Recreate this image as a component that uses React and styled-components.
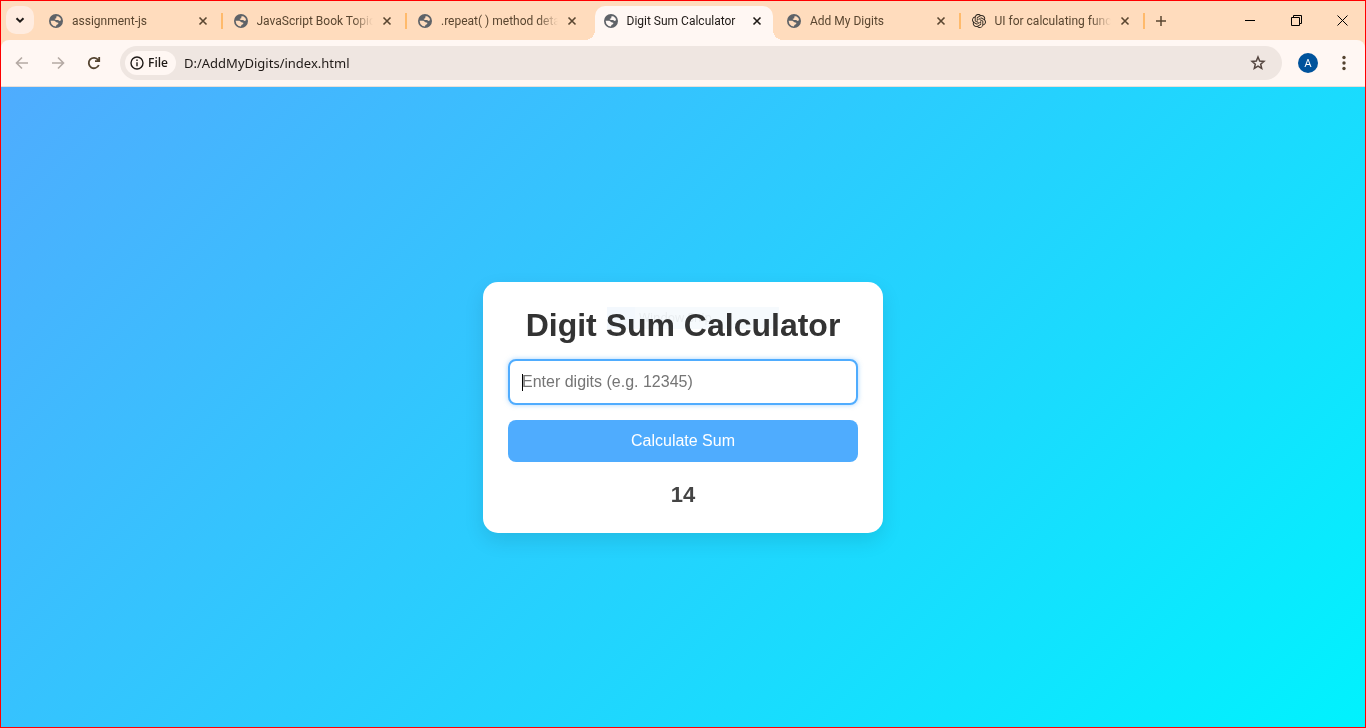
import React, { useState } from "react";
import styled, { createGlobalStyle, css } from "styled-components";
import { SiOpenai } from "react-icons/si";

const GlobalStyle = createGlobalStyle`
  *, *::before, *::after { box-sizing: border-box; }
  body { margin: 0; }
  button, input { font: inherit; color: inherit; margin: 0; }
  button { border: 0; background: none; padding: 0; cursor: pointer; }
`;

const chromeFont = `"Segoe UI", "Open Sans", "Noto Sans", sans-serif`;
const tabFont = `"Segoe UI", Roboto, "Open Sans", sans-serif`;
const strip = "#ffdcbd";
const bar = "#fff7f3";

const Window = styled.div`
  min-height: 100vh;
  display: flex;
  flex-direction: column;
  border: 1px solid #f00;
`;

const TabStrip = styled.header`
  display: flex;
  align-items: stretch;
  height: 39px;
  background: ${strip};
  font: 12px/16px ${tabFont};
  color: #5a4630;
`;

const TabSearch = styled.button`
  display: grid;
  place-items: center;
  flex: none;
  width: 28px;
  height: 28px;
  margin: 5px 4px 0 5px;
  border-radius: 10px;
  background: #ffece0;
  color: #1f1a17;
`;

const TabList = styled.div`
  display: grid;
  grid-template-columns: repeat(6, minmax(0, 1fr));
  flex: 0 1 1107px;
  min-width: 0;
`;

const Tab = styled.div`
  position: relative;
  display: flex;
  align-items: center;
  min-width: 0;
  padding-left: 11px;
  ${(p) =>
    p.$active &&
    css`
      color: #1f1a17;
      margin: 5px 3px 0;
      padding: 0 0 5px 9px;
      border-radius: 10px 10px 0 0;
      background: ${bar};
      &::before,
      &::after {
        content: "";
        position: absolute;
        bottom: 0;
        width: 10px;
        height: 10px;
      }
      &::before {
        right: 100%;
        background: radial-gradient(circle at 0 0, transparent 10px, ${bar} 10px);
      }
      &::after {
        left: 100%;
        background: radial-gradient(circle at 100% 0, transparent 10px, ${bar} 10px);
      }
    `}
`;

const TabLabel = styled.button`
  display: flex;
  align-items: center;
  gap: 9px;
  flex: 1;
  min-width: 0;
  text-align: left;
  svg { flex: none; }
`;

const TabTitle = styled.span`
  flex: 1;
  overflow: hidden;
  white-space: nowrap;
  ${(p) =>
    p.$fade &&
    css`
      mask-image: linear-gradient(to left, transparent, #000 20px);
    `}
`;

const TabClose = styled.button`
  display: grid;
  place-items: center;
  flex: none;
  width: 16px;
  height: 16px;
  margin: 0 ${(p) => (p.$active ? 8 : 10)}px 0 6px;
`;

const Divider = styled.span`
  flex: none;
  width: 2px;
  height: 16px;
  background: ${(p) => (p.$hidden ? "transparent" : "#ffba6b")};
`;

const NewTab = styled.button`
  display: grid;
  place-items: center;
  flex: none;
  width: 32px;
`;

const WindowControls = styled.div`
  display: flex;
  margin-left: auto;
  color: #000;
`;

const WindowButton = styled.button`
  display: grid;
  place-items: center;
  width: 46px;
  padding-left: 1px;
`;

const ToolbarBack = styled.div`
  background: ${strip};
`;

const Toolbar = styled.nav`
  display: flex;
  align-items: center;
  height: 47px;
  padding: 0 3px;
  border-bottom: 1px solid #e8dfd9;
  border-radius: 8px 8px 0 0;
  background: ${bar};
  font: 13px/18px ${chromeFont};
  color: #54432f;
`;

const ToolButton = styled.button`
  display: grid;
  place-items: center;
  flex: none;
  width: 36px;
  height: 34px;
  &:disabled { color: #b5aaa4; }
`;

const AddressBar = styled.div`
  display: flex;
  align-items: center;
  flex: 1;
  min-width: 0;
  height: 34px;
  margin: 0 8px;
  padding: 0 14px 0 5px;
  border-radius: 17px;
  background: #efe6e1;
  color: #1f1a17;
`;

const FileChip = styled.button`
  display: flex;
  align-items: center;
  gap: 3px;
  height: 24px;
  padding: 0 8px 0 4px;
  border-radius: 12px;
  background: ${bar};
  font-size: 12px;
  font-weight: 600;
`;

const Address = styled.input`
  flex: 1;
  min-width: 0;
  border: 0;
  padding: 0 8px;
  outline: 0;
  background: none;
  font-family: "Segoe UI", "Noto Sans", sans-serif;
`;

const BookmarkButton = styled.button`
  display: grid;
  place-items: center;
  width: 20px;
  height: 20px;
  color: #54453f;
`;

const Avatar = styled.span`
  display: grid;
  place-items: center;
  width: 20px;
  height: 20px;
  border-radius: 50%;
  background: #00539c;
  color: #fff;
  font-size: 11px;
`;

const Page = styled.main`
  flex: 1;
  display: flex;
  align-items: center;
  justify-content: center;
  background: linear-gradient(135deg, #4facfe, #00f2fe);
  font-family: Arial, "Liberation Sans", sans-serif;
`;

const Card = styled.form`
  position: relative;
  width: 400px;
  max-width: 100%;
  padding: 25px;
  border-radius: 15px;
  background: #fff;
  box-shadow: 0 8px 20px rgba(0, 0, 0, 0.1);
  text-align: center;
`;

const Heading = styled.h1`
  margin: 0 0 15px;
  font-size: 32px;
  line-height: 37px;
  color: #333;
`;

const DigitsInput = styled.input`
  display: block;
  width: 100%;
  height: 46px;
  margin-bottom: 15px;
  padding: 12px;
  border: 2px solid #4facfe;
  border-radius: 8px;
  outline: 0;
  font-size: 16px;
  line-height: 18px;
  color: #000;
  caret-color: transparent;
  background: linear-gradient(#000, #000) 12px 13px / 1px 17px no-repeat #fff;
  box-shadow: 0 0 5px rgba(79, 172, 254, 0.5);
  &::placeholder { color: #757575; }
`;

const SubmitButton = styled.button`
  display: block;
  width: 100%;
  height: 42px;
  border-radius: 8px;
  background: #4facfe;
  color: #fff;
  font-size: 16px;
`;

const Result = styled.output`
  display: block;
  margin-top: 20px;
  font-size: 22px;
  font-weight: bold;
  line-height: 26px;
  color: #444;
`;

const SnipHint = styled.div`
  position: absolute;
  top: 25px;
  left: 124px;
  width: 172px;
  height: 22px;
  padding-left: 32px;
  background: linear-gradient(to right, #f3f8fd 28px, #f6fafd 28px);
  color: #e9edf0;
  font: 12px/22px ${chromeFont};
  text-align: left;
  mix-blend-mode: multiply;
  pointer-events: none;
`;

const Stroke = ({ size, d, width = 2 }) => (
  <svg width={size} height={size} viewBox={`0 0 ${size} ${size}`} fill="none" stroke="currentColor" strokeWidth={width} aria-hidden="true">
    <path d={d} />
  </svg>
);

const Globe = () => (
  <svg width="14" height="14" viewBox="0 0 14 14" fill="#5f6368" fillRule="evenodd" aria-hidden="true">
    <path d="M7 0A7 7 0 1 1 7 14A7 7 0 1 1 7 0ZM7.500 2.200L9.200 2.200 11.400 4 12.100 6.300 10.200 6.900 9.300 6 6.800 6 5.500 4.900 7.200 4.200ZM1.600 6.800L5.400 6.800 7.400 8.200 9.300 8.700 9.200 10 7.400 11 7 12.400 4.600 12 2.400 10Z" />
  </svg>
);

const tabs = [
  { title: "assignment-js" },
  { title: "JavaScript Book Topic", fade: true },
  { title: ".repeat( ) method deta", fade: true, noDivider: true },
  { title: "Digit Sum Calculator", active: true },
  { title: "Add My Digits" },
  { title: "UI for calculating func", fade: true, openai: true },
];

export default function App() {
  const [digits, setDigits] = useState("");
  const [sum, setSum] = useState(14);

  const calculate = (event) => {
    event.preventDefault();
    setSum([...digits].reduce((total, digit) => total + (Number(digit) || 0), 0));
  };

  return (
    <Window>
      <GlobalStyle />
      <TabStrip>
        <TabSearch aria-label="Search tabs">
          <Stroke size={10} d="M1.5 3.2 5 6.7 8.5 3.2" />
        </TabSearch>
        <TabList>
          {tabs.map((tab) => (
            <Tab key={tab.title} $active={tab.active}>
              <TabLabel>
                {tab.openai ? <SiOpenai size={14} color="#2b241c" /> : <Globe />}
                <TabTitle $fade={tab.fade}>{tab.title}</TabTitle>
              </TabLabel>
              <TabClose aria-label={`Close ${tab.title}`} $active={tab.active}>
                <Stroke size={10} width={1.6} d="M1.500 1.500 8.500 8.500M8.500 1.500 1.500 8.500" />
              </TabClose>
              {!tab.active && <Divider $hidden={tab.noDivider} />}
            </Tab>
          ))}
        </TabList>
        <NewTab aria-label="New tab">
          <Stroke size={12} width={1.5} d="M6 1V11M1 6H11" />
        </NewTab>
        <WindowControls>
          <WindowButton aria-label="Minimize">
            <Stroke size={11} width={1} d="M0 5.5H10" />
          </WindowButton>
          <WindowButton aria-label="Restore">
            <Stroke size={11} width={1} d="M.5 2.5H8.5V10.5H.5ZM2.5 2.5V.5H10.5V8.5H8.5" />
          </WindowButton>
          <WindowButton aria-label="Close">
            <Stroke size={11} width={1} d="M.5.5 10.5 10.5M10.5.5.5 10.5" />
          </WindowButton>
        </WindowControls>
      </TabStrip>
      <ToolbarBack>
        <Toolbar>
          <ToolButton aria-label="Back" disabled>
            <Stroke size={14} width={1.6} d="M13 7H2M7 1.5 1.5 7 7 12.5" />
          </ToolButton>
          <ToolButton aria-label="Forward" disabled>
            <Stroke size={14} width={1.6} d="M1 7H12M7 1.5 12.5 7 7 12.5" />
          </ToolButton>
          <ToolButton aria-label="Reload">
            <Stroke size={14} width={1.8} d="M11.8 9A5.2 5.2 0 1 1 11.2 4L12 5M12.2 1V5.2H8" />
          </ToolButton>
          <AddressBar>
            <FileChip>
              <svg width="16" height="16" viewBox="0 0 16 16" fill="none" stroke="currentColor" strokeWidth="1.4" aria-hidden="true">
                <circle cx="8" cy="8" r="6" />
                <path d="M8 7.2V11.2M8 4.6V6.1" />
              </svg>
              File
            </FileChip>
            <Address aria-label="Address" defaultValue="D:/AddMyDigits/index.html" />
            <BookmarkButton aria-label="Bookmark this page">
              <svg width="16" height="16" viewBox="0 0 16 16" fill="none" stroke="currentColor" strokeWidth="1.5" aria-hidden="true">
                <path d="M8 2 9.700 6 14 6.400 10.700 9.200 11.700 13.400 8 11.200 4.300 13.400 5.300 9.200 2 6.400 6.300 6Z" />
              </svg>
            </BookmarkButton>
          </AddressBar>
          <ToolButton aria-label="Profile">
            <Avatar>A</Avatar>
          </ToolButton>
          <ToolButton aria-label="Menu">
            <svg width="4" height="16" viewBox="0 0 4 16" fill="currentColor" aria-hidden="true">
              <circle cx="2" cy="2.5" r="1.7" />
              <circle cx="2" cy="8" r="1.7" />
              <circle cx="2" cy="13.5" r="1.7" />
            </svg>
          </ToolButton>
        </Toolbar>
      </ToolbarBack>
      <Page>
        <Card onSubmit={calculate}>
          <Heading>Digit Sum Calculator</Heading>
          <DigitsInput
            aria-label="Digits"
            placeholder="Enter digits (e.g. 12345)"
            value={digits}
            onChange={(event) => setDigits(event.target.value)}
          />
          <SubmitButton type="submit">Calculate Sum</SubmitButton>
          <Result>{sum}</Result>
          <SnipHint>Window Snip</SnipHint>
        </Card>
      </Page>
    </Window>
  );
}
